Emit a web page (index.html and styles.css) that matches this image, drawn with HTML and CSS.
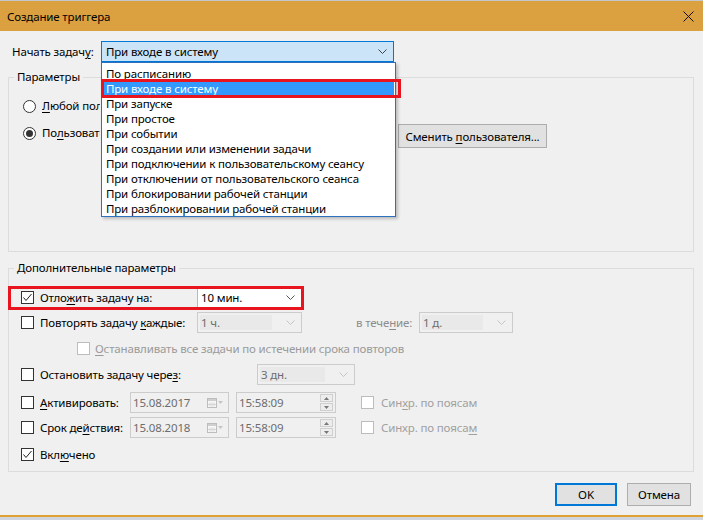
FILE: index.html
```html
<!DOCTYPE html>
<html lang="ru">
<head>
<meta charset="utf-8">
<title>Создание триггера</title>
<link rel="stylesheet" href="styles.css">
</head>
<body>
<div class="window">
  <div class="topstrip"></div>
  <div class="titlebar">
    <span class="title">Создание триггера</span>
    <svg class="close" width="11" height="11" viewBox="0 0 11 11"><path d="M0.5 0.5 L10.5 10.5 M10.5 0.5 L0.5 10.5" stroke="#111" stroke-width="1" fill="none"/></svg>
  </div>
  <div class="content">
    <div class="start-row">
      <span class="start-label">Начать задач<u>у</u>:</span>
      <div class="combo combo-start"><span>При входе в систему</span><svg class="chev" width="9" height="5" viewBox="0 0 9 5"><polyline points="0.5,0.5 4.5,4.5 8.5,0.5" fill="none" stroke="#444"/></svg></div>
    </div>

    <fieldset class="group group-params">
      <legend>Параметры</legend>
      <div class="radio-row r-any"><span class="radio"></span><span class="rlabel"><span class="clip"><u>Л</u>юбой пользователь</span></span></div>
      <div class="radio-row r-user"><span class="radio checked"></span><span class="rlabel user-label"><span class="clip">По<u>л</u>ьзователь:</span></span><button class="btn btn-change">Сменить <u>п</u>ользователя...</button></div>
    </fieldset>

    <fieldset class="group group-extra">
      <legend>Дополнительные параметры</legend>
      <div class="row r1">
        <div class="check-cell w176"><span class="cb"><svg width="11" height="11" viewBox="0 0 11 11"><polyline points="1.5,5.5 4,8.5 9.5,2" fill="none" stroke="#222" stroke-width="1"/></svg></span><span class="ctext">Отло<u>ж</u>ить задачу на:</span></div>
        <div class="combo combo-en w105"><span>10 мин.</span><svg class="chev" width="9" height="5" viewBox="0 0 9 5"><polyline points="0.5,0.5 4.5,4.5 8.5,0.5" fill="none" stroke="#555"/></svg></div>
      </div>
      <div class="row r2">
        <div class="check-cell w176"><span class="cb"></span><span class="ctext">Повторять задачу <u>к</u>аждые:</span></div>
        <div class="combo combo-dis w105"><span class="inner">1 ч.</span><svg class="chev" width="9" height="5" viewBox="0 0 9 5"><polyline points="0.5,0.5 4.5,4.5 8.5,0.5" fill="none" stroke="#c4c4c4"/></svg></div>
        <span class="dis-label during">в тече<u>н</u>ие:</span>
        <div class="combo combo-dis w94"><span class="inner">1 д.</span><svg class="chev" width="9" height="5" viewBox="0 0 9 5"><polyline points="0.5,0.5 4.5,4.5 8.5,0.5" fill="none" stroke="#c4c4c4"/></svg></div>
      </div>
      <div class="row r3">
        <span class="cb cb-dis"></span><span class="dis-label stop-all"><u>О</u>станавливать все задачи по истечении срока повторов</span>
      </div>
      <div class="row r4">
        <div class="check-cell w236"><span class="cb"></span><span class="ctext">Остановить задачу чере<u>з</u>:</span></div>
        <div class="combo combo-dis w98"><span class="inner">3 дн.</span><svg class="chev" width="9" height="5" viewBox="0 0 9 5"><polyline points="0.5,0.5 4.5,4.5 8.5,0.5" fill="none" stroke="#c4c4c4"/></svg></div>
      </div>
      <div class="row r5">
        <div class="check-cell w109"><span class="cb"></span><span class="ctext"><u>А</u>ктивировать:</span></div>
        <div class="field date"><span>15.08.2017</span><span class="cal"><svg width="16" height="10" viewBox="0 0 16 10"><rect x="0.5" y="0.5" width="9" height="9" fill="#f7f7f7" stroke="#bdbdbd"/><rect x="1" y="1" width="8" height="2" fill="#cfcfcf"/><path d="M3 4.5v4M5 4.5v4M7 4.5v4M1 6.5h8" stroke="#d6d6d6"/><polygon points="11,3 16,3 13.5,6" fill="#c6c6c6"/></svg></span></div>
        <div class="field time"><span>15:58:09</span><span class="spin"><span class="sb"><svg width="5" height="3" viewBox="0 0 5 3"><polygon points="0,3 5,3 2.5,0" fill="#777"/></svg></span><span class="sb"><svg width="5" height="3" viewBox="0 0 5 3"><polygon points="0,0 5,0 2.5,3" fill="#777"/></svg></span></span></div>
        <span class="cb cb-dis sync-cb"></span><span class="sync-label">Син<u>х</u>р. по поясам</span>
      </div>
      <div class="row r6">
        <div class="check-cell w109"><span class="cb"></span><span class="ctext">Срок де<u>й</u>ствия:</span></div>
        <div class="field date"><span>15.08.2018</span><span class="cal"><svg width="16" height="10" viewBox="0 0 16 10"><rect x="0.5" y="0.5" width="9" height="9" fill="#f7f7f7" stroke="#bdbdbd"/><rect x="1" y="1" width="8" height="2" fill="#cfcfcf"/><path d="M3 4.5v4M5 4.5v4M7 4.5v4M1 6.5h8" stroke="#d6d6d6"/><polygon points="11,3 16,3 13.5,6" fill="#c6c6c6"/></svg></span></div>
        <div class="field time"><span>15:58:09</span><span class="spin"><span class="sb"><svg width="5" height="3" viewBox="0 0 5 3"><polygon points="0,3 5,3 2.5,0" fill="#777"/></svg></span><span class="sb"><svg width="5" height="3" viewBox="0 0 5 3"><polygon points="0,0 5,0 2.5,3" fill="#777"/></svg></span></span></div>
        <span class="cb cb-dis sync-cb"></span><span class="sync-label">Синхр. по пояса<u>м</u></span>
      </div>
      <div class="row r7">
        <span class="cb"><svg width="11" height="11" viewBox="0 0 11 11"><polyline points="1.5,5.5 4,8.5 9.5,2" fill="none" stroke="#222" stroke-width="1"/></svg></span><span class="ctext">Вкл<u>ю</u>чено</span>
      </div>
    </fieldset>

    <div class="actions">
      <button class="btn btn-ok">OK</button>
      <button class="btn btn-cancel">Отмена</button>
    </div>
  </div>
  <div class="bottom-line"></div>
  <div class="taskbar"></div>

  <ul class="dropdown-list">
    <li>По расписанию</li>
    <li class="sel">При входе в систему</li>
    <li>При запуске</li>
    <li>При простое</li>
    <li>При событии</li>
    <li>При создании или изменении задачи</li>
    <li>При подключении к пользовательскому сеансу</li>
    <li>При отключении от пользовательского сеанса</li>
    <li>При блокировании рабочей станции</li>
    <li>При разблокировании рабочей станции</li>
  </ul>
  <div class="mark mark-list"></div>
  <div class="mark mark-delay"></div>
</div>
</body>
</html>
```

FILE: styles.css
```css
* { box-sizing: border-box; }
html, body { margin: 0; padding: 0; }
body {
  width: 703px;
  height: 520px;
  overflow: hidden;
  background: #F0F0F0;
  font-family: "Noto Sans", "Liberation Sans", sans-serif;
  font-size: 11.5px;
  letter-spacing: -0.15px;
  color: #000;
}
u { text-decoration: underline; text-underline-offset: 2px; }

.window {
  position: relative;
  width: 703px;
  height: 520px;
  display: flex;
  flex-direction: column;
  background: #F0F0F0;
}
.topstrip { height: 1px; background: #c3c7cc; }
.titlebar {
  height: 30px;
  background: #DBA040;
  display: flex;
  align-items: center;
  justify-content: space-between;
  padding: 0 9px 0 7px;
  flex-shrink: 0;
}
.title { color: #000; }

.content {
  flex: 1;
  display: flex;
  flex-direction: column;
  padding: 10px 9px 0 8px;
}

.start-row { display: flex; align-items: center; height: 21px; }
.start-label { width: 93px; padding-left: 4px; }

.combo {
  display: flex;
  align-items: center;
  justify-content: space-between;
  height: 21px;
  border: 1px solid #ABABAB;
  padding: 0 6px 0 3px;
  flex-shrink: 0;
}
.combo-start { width: 293px; background: #CCE4F7; border-color: #0078D7; padding-left: 4px; }
.combo-en { background: #fff; border-color: #B9B9B9; }
.combo-dis { background: #F0F0F0; border-color: #CCCCCC; padding-left: 2px; color: #6D6D6D; }
.combo-dis .inner { background: #E9E9E9; flex: 1; margin-right: 14px; height: 15px; line-height: 15px; padding-left: 1px; }
.w105 { width: 105px; }
.w94 { width: 94px; }
.w98 { width: 98px; }

.group {
  margin: 0;
  padding: 11px 0 0 0;
  border: 1px solid #DCDCDC;
  min-width: 0;
}
.group legend {
  padding: 0 3px;
  margin-left: 5px;
  line-height: 16px;
}
.group-params { margin-top: 7px; height: 183px; }
.group-extra { margin-top: 8px; height: 212px; }

.radio-row { display: flex; padding-left: 14px; }
.r-any { height: 20px; align-items: center; }
.r-user { margin-top: 8px; height: 24px; align-items: flex-start; }
.r-user .radio { margin-top: 3px; }
.r-user .rlabel { margin-top: 1px; }
.radio {
  width: 13px;
  height: 13px;
  border: 1px solid #333;
  border-radius: 50%;
  background: #fff;
  display: flex;
  align-items: center;
  justify-content: center;
  flex-shrink: 0;
}
.radio.checked::before {
  content: "";
  width: 7px;
  height: 7px;
  border-radius: 50%;
  background: #333;
}
.rlabel { margin-left: 6px; line-height: 16px; }
.clip { display: block; width: 58px; overflow: hidden; white-space: nowrap; }
.user-label { width: 356px; }

.btn {
  font: inherit;
  letter-spacing: inherit;
  color: #000;
  background: #E1E1E1;
  border: 1px solid #ADADAD;
  height: 23px;
  padding: 0;
}
.btn-change { width: 149px; height: 24px; }
.btn-ok { width: 62px; border: 2px solid #0078D7; }
.btn-cancel { width: 64px; }

.row { display: flex; align-items: center; height: 21px; padding-left: 12px; }
.r1 { margin-top: 0; }
.r2 { margin-top: 4px; }
.r3 { margin-top: 5px; padding-left: 68px; }
.r4 { margin-top: 5px; }
.r5 { margin-top: 7px; }
.r6 { margin-top: 4px; }
.r7 { margin-top: 6px; }

.check-cell { display: flex; align-items: center; flex-shrink: 0; }
.w176 { width: 176px; }
.w236 { width: 236px; }
.w109 { width: 109px; }

.cb {
  width: 13px;
  height: 13px;
  border: 1px solid #333;
  background: #fff;
  display: flex;
  align-items: center;
  justify-content: center;
  flex-shrink: 0;
}
.cb-dis { border-color: #BCBCBC; }
.ctext { margin-left: 6px; }

.dis-label { color: #8C8C8C; }
.during { margin-left: 54px; width: 63px; }
.stop-all { margin-left: 5px; color: #9A9A9A; }

.field {
  display: flex;
  align-items: center;
  justify-content: space-between;
  height: 21px;
  border: 1px solid #CCCCCC;
  background: #F0F0F0;
  color: #6D6D6D;
  padding-left: 2px;
  flex-shrink: 0;
}
.date { width: 99px; padding-right: 5px; }
.cal { display: flex; }
.time { width: 100px; margin-left: 7px; padding-right: 2px; }
.spin { display: flex; flex-direction: column; gap: 1px; }
.sb {
  width: 13px;
  height: 8px;
  border: 1px solid #CFCFCF;
  background: #EDEDED;
  display: flex;
  align-items: center;
  justify-content: center;
}
.sync-cb { margin-left: 25px; }
.sync-label { margin-left: 7px; color: #A0A0A0; }

.actions {
  display: flex;
  justify-content: flex-end;
  gap: 10px;
  margin-top: 11px;
  padding-right: 3px;
}

.bottom-line { height: 2px; background: #E0A033; flex-shrink: 0; }
.taskbar { height: 3px; background: #cfd6df; flex-shrink: 0; }

.dropdown-list {
  position: absolute;
  left: 101px;
  top: 62px;
  width: 295px;
  height: 155px;
  margin: 0;
  padding: 3px 1px 0 1px;
  list-style: none;
  background: #fff;
  border: 1px solid #2C70BE;
  box-shadow: 2px 2px 3px rgba(0,0,0,0.22);
}
.dropdown-list li {
  height: 15px;
  line-height: 15px;
  padding-left: 3px;
  white-space: nowrap;
}
.dropdown-list li.sel { background: #3399FF; color: #fff; }

.mark {
  position: absolute;
  border: 3px solid #E8141E;
}
.mark-list { left: 101px; top: 79px; width: 300px; height: 19px; }
.mark-delay { left: 8px; top: 286px; width: 296px; height: 24px; }
```
